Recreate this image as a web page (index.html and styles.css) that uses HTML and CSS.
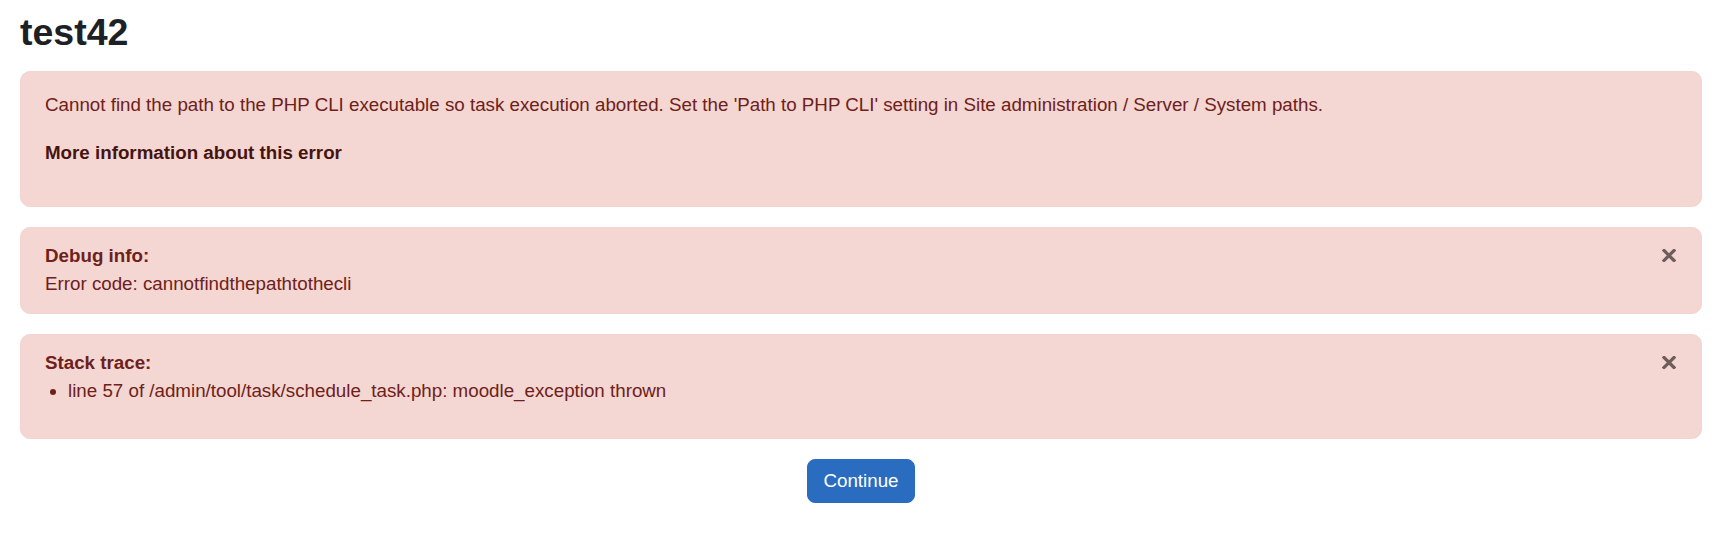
FILE: index.html
```html
<!DOCTYPE html>
<html lang="en">
<head>
<meta charset="utf-8">
<title>test42</title>
<link rel="stylesheet" href="styles.css">
</head>
<body>
<div class="page">
  <h2 class="page-title">test42</h2>

  <div class="alert alert-error">
    <p class="errormessage">Cannot find the path to the PHP CLI executable so task execution aborted. Set the 'Path to PHP CLI' setting in Site administration / Server / System paths.</p>
    <p class="moreinfo"><a class="alert-link" href="#">More information about this error</a></p>
  </div>

  <div class="alert alert-dismissible">
    <button class="close" type="button" aria-label="Close">
      <svg width="14" height="13" viewBox="0 0 14 13"><path d="M2 1.5 L12 11.5 M12 1.5 L2 11.5" stroke="currentColor" stroke-width="3.2" stroke-linecap="square"/></svg>
    </button>
    <div class="label">Debug info:</div>
    <div class="info">Error code: cannotfindthepathtothecli</div>
  </div>

  <div class="alert alert-dismissible">
    <button class="close" type="button" aria-label="Close">
      <svg width="14" height="13" viewBox="0 0 14 13"><path d="M2 1.5 L12 11.5 M12 1.5 L2 11.5" stroke="currentColor" stroke-width="3.2" stroke-linecap="square"/></svg>
    </button>
    <div class="label">Stack trace:</div>
    <ul class="trace">
      <li>line 57 of /admin/tool/task/schedule_task.php: moodle_exception thrown</li>
    </ul>
  </div>

  <div class="continue">
    <button class="btn-primary" type="button">Continue</button>
  </div>
</div>
</body>
</html>
```

FILE: styles.css
```css
* { box-sizing: border-box; }

html, body {
  margin: 0;
  padding: 0;
  background: #ffffff;
}

body {
  font-family: "Liberation Sans", Arial, sans-serif;
  font-size: 18.75px;
  line-height: 28.125px;
  color: #1d2125;
}

.page {
  padding: 10px 28px 0 20px;
}

.page-title {
  margin: 0 0 16px 0;
  font-size: 37.5px;
  line-height: 45px;
  font-weight: 700;
  color: #1d2125;
}

.alert {
  position: relative;
  background: #f4d6d2;
  border: 1px solid #f3d4d0;
  border-radius: 10px;
  color: #6e211a;
  margin-bottom: 20px;
}

.alert p {
  margin: 0;
}

.alert-error {
  padding: 19px 24px 20px 24px;
}

.alert .errormessage {
  margin-bottom: 19.5px;
}

.alert .moreinfo {
  margin-bottom: 19.5px;
}

.alert-link {
  color: #46140f;
  font-weight: 700;
  text-decoration: none;
}

.alert-dismissible {
  padding: 14px 80px 14px 24px;
}

.label {
  font-weight: 700;
}

.trace {
  margin: 0 0 19px 0;
  padding-left: 23px;
}

.close {
  position: absolute;
  top: 21px;
  right: 25px;
  width: 14px;
  height: 13px;
  padding: 0;
  margin: 0;
  border: 0;
  background: transparent;
  color: #6f5d5c;
  display: flex;
}

.continue {
  display: flex;
  justify-content: center;
}

.btn-primary {
  font-family: "Liberation Sans", Arial, sans-serif;
  font-size: 18.75px;
  line-height: 28.125px;
  color: #ffffff;
  background: #296cc0;
  border: 1px solid #296cc0;
  border-radius: 8px;
  padding: 7px 15px;
}
```
